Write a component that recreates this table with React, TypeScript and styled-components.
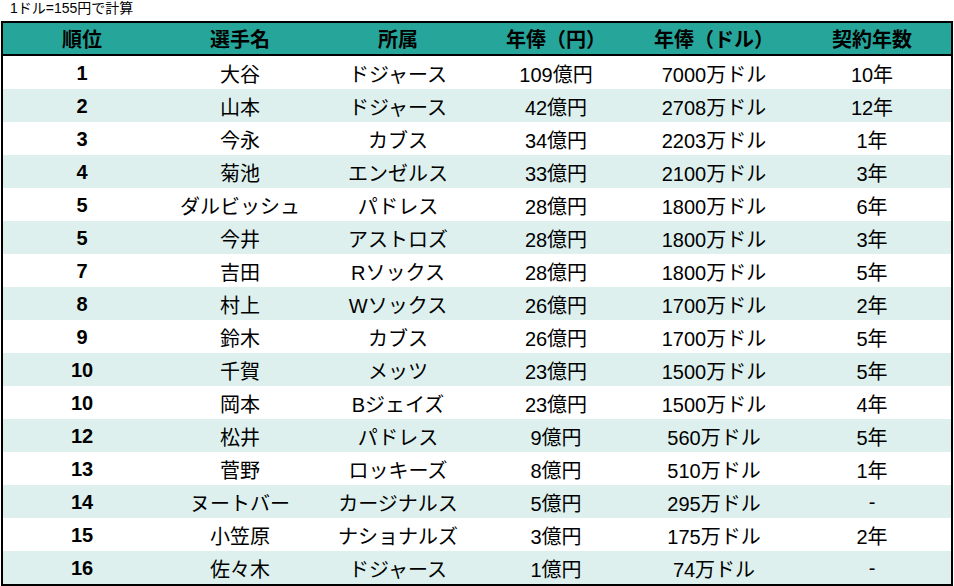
import React from "react";
import styled, { createGlobalStyle } from "styled-components";

const GlobalStyle = createGlobalStyle`
  html, body { margin: 0; padding: 0; background: #ffffff; }
  body { font-family: "Liberation Sans", Arial, "Noto Sans CJK JP", sans-serif; color: #000; }
`;

const Page = styled.div`
  width: 954px;
  display: flex;
  flex-direction: column;
`;

const Caption = styled.div`
  height: 21px;
  line-height: 17px;
  font-size: 14px;
  padding-left: 10px;
  color: #000;
`;

const Table = styled.table`
  margin-left: 1px;
  width: 952px;
  border: 2px solid #000;
  border-collapse: separate;
  border-spacing: 0;
  table-layout: fixed;
`;

const HeadCell = styled.th`
  height: 31px;
  padding: 0;
  background: #26a69a;
  border-bottom: 2px solid #000;
  font-size: 20px;
  font-weight: 700;
  text-align: center;
  color: #000;
`;

const Row = styled.tr<{ $alt: boolean }>`
  background: ${(p) => (p.$alt ? "#ddf0ee" : "#ffffff")};
`;

const Cell = styled.td<{ $bold?: boolean }>`
  height: 31px;
  padding: 2px 0 0;
  font-size: 20px;
  font-weight: ${(p) => (p.$bold ? 700 : 400)};
  text-align: center;
  color: #000;
`;

const headers = ["順位", "選手名", "所属", "年俸（円）", "年俸（ドル）", "契約年数"];

const rows: string[][] = [
  ["1", "大谷", "ドジャース", "109億円", "7000万ドル", "10年"],
  ["2", "山本", "ドジャース", "42億円", "2708万ドル", "12年"],
  ["3", "今永", "カブス", "34億円", "2203万ドル", "1年"],
  ["4", "菊池", "エンゼルス", "33億円", "2100万ドル", "3年"],
  ["5", "ダルビッシュ", "パドレス", "28億円", "1800万ドル", "6年"],
  ["5", "今井", "アストロズ", "28億円", "1800万ドル", "3年"],
  ["7", "吉田", "Rソックス", "28億円", "1800万ドル", "5年"],
  ["8", "村上", "Wソックス", "26億円", "1700万ドル", "2年"],
  ["9", "鈴木", "カブス", "26億円", "1700万ドル", "5年"],
  ["10", "千賀", "メッツ", "23億円", "1500万ドル", "5年"],
  ["10", "岡本", "Bジェイズ", "23億円", "1500万ドル", "4年"],
  ["12", "松井", "パドレス", "9億円", "560万ドル", "5年"],
  ["13", "菅野", "ロッキーズ", "8億円", "510万ドル", "1年"],
  ["14", "ヌートバー", "カージナルス", "5億円", "295万ドル", "-"],
  ["15", "小笠原", "ナショナルズ", "3億円", "175万ドル", "2年"],
  ["16", "佐々木", "ドジャース", "1億円", "74万ドル", "-"],
];

export default function App() {
  return (
    <Page>
      <GlobalStyle />
      <Caption>1ドル=155円で計算</Caption>
      <Table>
        <thead>
          <tr>
            {headers.map((h) => (
              <HeadCell key={h}>{h}</HeadCell>
            ))}
          </tr>
        </thead>
        <tbody>
          {rows.map((r, i) => (
            <Row key={i} $alt={i % 2 === 1}>
              {r.map((c, j) => (
                <Cell key={j} $bold={j === 0}>
                  {c}
                </Cell>
              ))}
            </Row>
          ))}
        </tbody>
      </Table>
    </Page>
  );
}
